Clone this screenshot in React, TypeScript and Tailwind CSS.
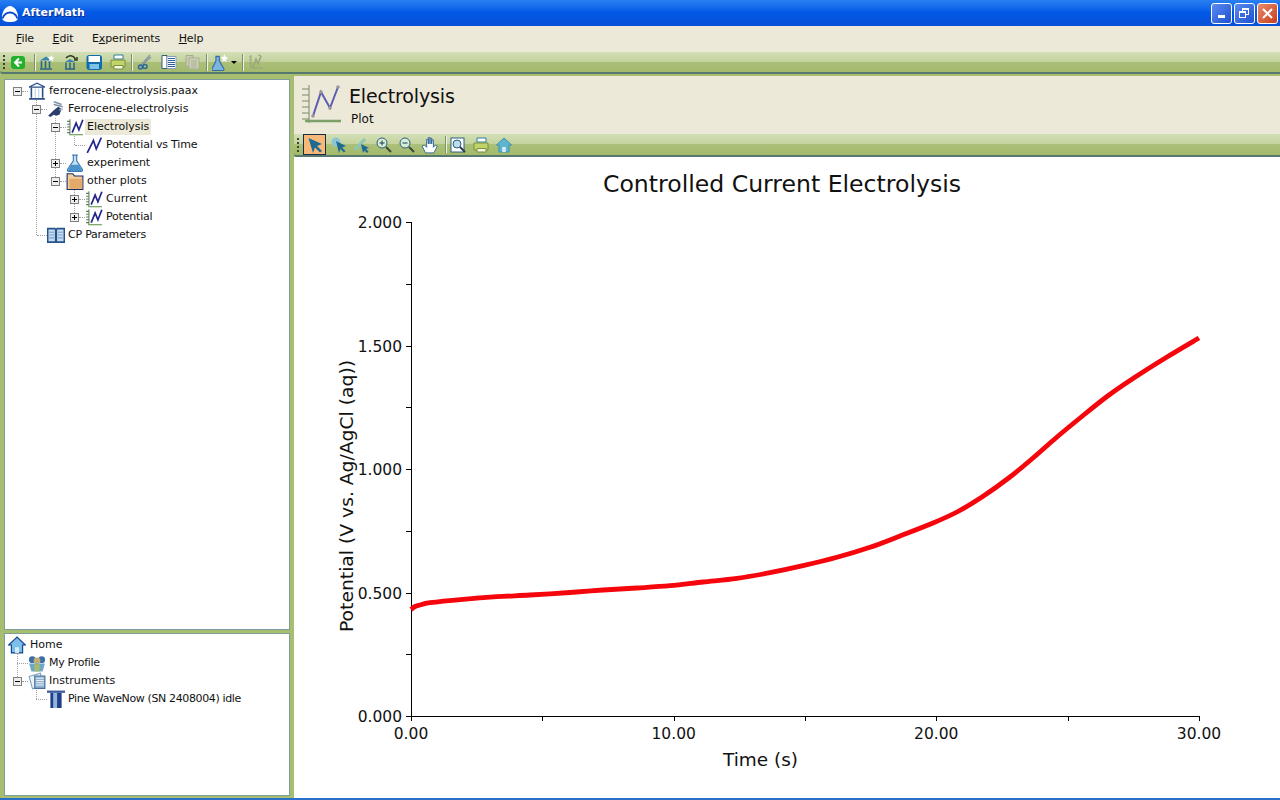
import type { JSX, ReactNode } from "react";

const FONT = "font-['DejaVu_Sans',sans-serif]";
const BIG = "w-[18px] h-[18px]";
const BAR = "flex items-center shrink-0 border-b-2 border-[#56786f] rounded-bl-[3px] bg-[linear-gradient(#d3dfb6,#c3d29d_50%,#abc078_50%,#a3ba6c)]";

function Icon({ children, size = "w-4 h-4" }: { children: ReactNode; size?: string }): JSX.Element {
  return (
    <svg viewBox="0 0 16 16" className={`${size} shrink-0`}>
      {children}
    </svg>
  );
}

function AppLogo(): JSX.Element {
  return (
    <svg viewBox="0 0 18 18" className="w-[18px] h-[18px] shrink-0">
      <path d="M1 12C1 6 5 1 9 1s8 5 8 11c0 4-3 5-8 5s-8-1-8-5Z" fill="#fff" />
      <path d="M1.500 13.500C3 9.500 6 7.500 9 7.500s6 2 7.500 6" fill="none" stroke="#0a46cc" strokeWidth="1.800" />
    </svg>
  );
}

function PlotIcon(): JSX.Element {
  return (
    <Icon size={BIG}>
      <path d="M3.500 1v14M1 3h2.500M1 5.500h2.500M1 8h2.500M1 10.500h2.500M1 13h2.500" stroke="#5a7a58" strokeWidth=".900" fill="none" />
      <path d="M3 14.800h12" stroke="#7fa86a" strokeWidth="1.200" />
      <path d="M5.500 13L9 4.500l2.500 6L15 1.500" stroke="#24268c" strokeWidth="1.500" fill="none" />
    </Icon>
  );
}

function LineIcon(): JSX.Element {
  return (
    <Icon size={BIG}>
      <path d="M2 15L7.500 4l2.500 7.500L14.500 1.500" stroke="#24268c" strokeWidth="1.500" fill="none" />
    </Icon>
  );
}

function ArchiveIcon(): JSX.Element {
  return (
    <Icon size={BIG}>
      <path d="M1 4.500L8 1l7 3.500z" fill="#fff" stroke="#2c4f86" />
      <path d="M3 5v9M13 5v9M1 15h14" stroke="#2c4f86" strokeWidth="1.400" fill="none" />
      <path d="M6.500 6v8M9.500 6v8" stroke="#bcd2e8" />
    </Icon>
  );
}

function ProjectIcon(): JSX.Element {
  return (
    <Icon size={BIG}>
      <path d="M1 14l5-5 4-3 3 2-2 5-3 1-2-1-3 2z" fill="#2c3f6b" />
      <path d="M6 1.500l7 2.500M6 4l8 2" stroke="#7f8fa6" strokeWidth="1.300" fill="none" />
      <path d="M11 9l3-1" stroke="#9fb3c8" strokeWidth="1.300" />
    </Icon>
  );
}

function FlaskIcon(): JSX.Element {
  return (
    <Icon size={BIG}>
      <path d="M5.500 1h5M6.500 1.500V6L1.500 13.500c-.600 1.200 0 2 1 2h11c1 0 1.600-.800 1-2L9.500 6V1.500" fill="#c4e0f2" stroke="#3a78b0" />
      <path d="M4.500 9.500h7l3 5.500H1.500z" fill="#4a92cc" />
    </Icon>
  );
}

function FolderIcon(): JSX.Element {
  return (
    <Icon size={BIG}>
      <path d="M1 1.500h5l1.500 2H15v12H1z" fill="#f3cf9a" stroke="#1f2f6b" />
      <path d="M3 6h11.500v9H3z" fill="#e2ab6c" />
    </Icon>
  );
}

function BookIcon(): JSX.Element {
  return (
    <Icon size={BIG}>
      <path d="M0 1.500h7.500l.500 1 .500-1H16V15H0z" fill="#27508c" />
      <path d="M1.300 3h5.700v10.500H1.300zM9 3h5.700v10.500H9z" fill="#c3dcef" />
      <path d="M2 5.500h4.300M2 8h4.300M2 10.500h4.300M9.700 5.500H14M9.700 8H14M9.700 10.500H14" stroke="#7da3c8" />
    </Icon>
  );
}

function HomeIcon({ toolbar = false }: { toolbar?: boolean }): JSX.Element {
  return (
    <Icon size={toolbar ? "w-4 h-4" : BIG}>
      <path d="M8 1L.500 8H3v7h10V8h2.500z" fill={toolbar ? "#5db5d0" : "#7cc0ea"} stroke={toolbar ? "#3f8fb0" : "#123f88"} strokeWidth="1" />
      <path d="M6.200 10h3.600v5H6.200z" fill="#d7ecf8" />
    </Icon>
  );
}

function ProfileIcon(): JSX.Element {
  return (
    <Icon size={BIG}>
      <circle cx="3.800" cy="5" r="3" fill="#3d6ea8" />
      <circle cx="12.200" cy="5" r="3" fill="#3d6ea8" />
      <circle cx="8" cy="6" r="3" fill="#c0b070" />
      <path d="M1 8.500h14l-2 7H3z" fill="#6ea7c9" />
      <path d="M5.500 9h5l-.500 6.500H6z" fill="#a8bd6a" />
    </Icon>
  );
}

function InstrumentsIcon(): JSX.Element {
  return (
    <Icon size={BIG}>
      <path d="M1 4l10-3 2 11-9 3z" fill="#edf4f8" stroke="#7fa3bf" />
      <path d="M6 3.500h9v11H6z" fill="#8fb5d0" stroke="#486f98" />
      <path d="M7 5.500h7M7 7.500h7M7 9.500h7M7 11.500h7" stroke="#e6f0f6" />
    </Icon>
  );
}

function PillarIcon(): JSX.Element {
  return (
    <Icon size={BIG}>
      <path d="M0 .500h16v2H0z" fill="#3c5a98" />
      <path d="M3 2.500h10V16H3z" fill="#1f3f86" />
      <path d="M5.500 2.500h3.500V16H5.500z" fill="#93b4e0" />
    </Icon>
  );
}

function Toggle({ open }: { open: boolean }): JSX.Element {
  return (
    <span className="w-[9px] h-[9px] border border-[#808080] bg-[#eeeeee] flex items-center justify-center shrink-0 relative z-10">
      <span className="w-[5px] h-px bg-black absolute" />
      {!open && <span className="w-px h-[5px] bg-black absolute" />}
    </span>
  );
}

type Row = {
  depth: number;
  label: string;
  icon: JSX.Element;
  toggle?: "open" | "closed";
  selected?: boolean;
  tight?: string;
};

// rows are 18px tall, every level moves 19px right like the Swing tree
function TreeRow({ depth, label, icon, toggle, selected, tight = "" }: Row): JSX.Element {
  const indent = ["pl-[8px]", "pl-[27px]", "pl-[46px]", "pl-[65px]"][depth];
  return (
    <div className={`h-[18px] flex items-center ${indent}`}>
      {toggle ? (
        <>
          <Toggle open={toggle === "open"} />
          <span className="w-[6px] border-t border-dotted border-[#a0a0a0]" />
        </>
      ) : (
        <span className="w-[10px] ml-[5px] border-t border-dotted border-[#a0a0a0]" />
      )}
      {icon}
      <span className={`ml-px text-[11px] leading-[16px] px-[2px] text-[#111] whitespace-nowrap ${tight} ${selected ? "bg-[#ece9d8]" : ""}`}>
        {label}
      </span>
    </div>
  );
}

const projectRows: Row[] = [
  { depth: 0, label: "ferrocene-electrolysis.paax", icon: <ArchiveIcon />, toggle: "open" },
  { depth: 1, label: "Ferrocene-electrolysis", icon: <ProjectIcon />, toggle: "open" },
  { depth: 2, label: "Electrolysis", icon: <PlotIcon />, toggle: "open", selected: true },
  { depth: 3, label: "Potential vs Time", icon: <LineIcon />, tight: "tracking-[-0.18px]" },
  { depth: 2, label: "experiment", icon: <FlaskIcon />, toggle: "closed" },
  { depth: 2, label: "other plots", icon: <FolderIcon />, toggle: "open" },
  { depth: 3, label: "Current", icon: <PlotIcon />, toggle: "closed" },
  { depth: 3, label: "Potential", icon: <PlotIcon />, toggle: "closed", tight: "tracking-[-0.2px]" },
  { depth: 1, label: "CP Parameters", icon: <BookIcon />, tight: "tracking-[-0.22px]" },
];

function Grip({ after }: { after: string }): JSX.Element {
  return (
    <span className={`flex flex-col gap-[2px] ml-[3px] shrink-0 ${after}`}>
      {[0, 1, 2, 3].map((i) => (
        <span key={i} className="w-[2px] h-[2px] bg-[#39452e]" />
      ))}
    </span>
  );
}

function Separator({ spacing }: { spacing: string }): JSX.Element {
  return <span className={`w-[2px] h-[17px] shrink-0 bg-[#eef3e0] border-l border-[#7d8f70] ${spacing}`} />;
}

function PrinterIcon(): JSX.Element {
  return (
    <Icon>
      <path d="M4 1h9v4H4z" fill="#fff" stroke="#2f7f9a" />
      <path d="M1 6h14v7H1z" fill="#c0d468" stroke="#7a8f40" />
      <path d="M4 11.500h9V15H4z" fill="#f6f8e4" stroke="#7a8f40" />
    </Icon>
  );
}

function MainToolbar(): JSX.Element {
  return (
    <div className={`h-[22px] ${BAR}`}>
      <Grip after="mr-[4px]" />
      <span className="w-[18px] flex justify-center">
        <Icon>
          <rect x="1" y="2" width="14" height="13" rx="3" fill="#22b02c" />
          <path d="M9 4.500L5 8.500l4 4M5.500 8.500H12" stroke="#fff" strokeWidth="2" fill="none" />
        </Icon>
      </span>
      <Separator spacing="ml-[7px] mr-[3px]" />
      <span className="flex items-center gap-[7.5px]">
        <Icon>
          <path d="M1 6.500l6-4 6 4z" fill="#3a86a8" />
          <path d="M2.500 7v7M6.500 7v7M10.500 7v7M1 15h12" stroke="#27668a" strokeWidth="1.600" fill="none" />
          <path d="M12 1l1 2 2.500.500-2 1.500.500 2.500-2-1.200-2 1.200.500-2.500-2-1.500 2.500-.500z" fill="#fff" />
        </Icon>
        <Icon>
          <path d="M2 8l5-3 5 3z" fill="#3a86a8" />
          <path d="M3 8.500v6M7 8.500v6M11 8.500v6M2 15h10" stroke="#27668a" strokeWidth="1.500" fill="none" />
          <path d="M3 4c3-3.500 7-3 9.500 1M14 3v3h-3" stroke="#2a3a20" strokeWidth="1.500" fill="none" />
        </Icon>
        <Icon>
          <rect x=".500" y="1" width="15.500" height="15" rx="3" fill="#0f6cae" />
          <rect x="2.500" y="2" width="11.500" height="6" fill="#fff" />
          <rect x="3.500" y="10" width="9.500" height="5" fill="#7fc0e6" />
        </Icon>
        <PrinterIcon />
      </span>
      <Separator spacing="ml-[5.500px] mr-[4px]" />
      <span className="flex items-center gap-[7.5px]">
        <Icon>
          <path d="M3 13L14 3M13 1L5 10" stroke="#8b9aa0" strokeWidth="1.500" fill="none" />
          <circle cx="3.500" cy="13" r="2" fill="none" stroke="#2c6a9a" strokeWidth="1.500" />
          <circle cx="8" cy="12.500" r="2" fill="none" stroke="#2c6a9a" strokeWidth="1.500" />
        </Icon>
        <Icon>
          <path d="M1 1.500h5v13H1z" fill="#fff" stroke="#3a5a80" />
          <path d="M6 2.500h9v12H6z" fill="#fff" stroke="#8aa0b8" />
          <path d="M7 4.500h7M7 6.500h7M7 8.500h7M7 10.500h7M7 12.500h7" stroke="#2c5f9a" />
        </Icon>
        <Icon>
          <path d="M2 1.500h7v11H2z" fill="#c7ccb2" stroke="#a8ad92" />
          <path d="M5 4h10v11H5z" fill="#ccd1b8" stroke="#a8ad92" />
          <path d="M7 7h6M7 9h6M7 11h6M7 13h6" stroke="#a8ad92" />
        </Icon>
      </span>
      <Separator spacing="ml-[6px] mr-[4px]" />
      <span className="flex items-center w-[24px]">
        <Icon size={BIG}>
          <path d="M3.500 3h3v4l4 7c.500 1 0 1.500-1 1.500H1c-1 0-1.500-.500-1-1.500l3.500-7z" fill="#7fb5dc" stroke="#2f6ca8" />
          <path d="M11 1l1 2.500 2.500.500-2 1.500.500 2.500-2-1.200-2 1.200.500-2.500-2-1.500 2.500-.500z" fill="#fff" />
        </Icon>
        <span className="w-0 h-0 ml-px border-l-[3px] border-r-[3px] border-t-[3px] border-l-transparent border-r-transparent border-t-black" />
      </span>
      <Separator spacing="ml-[6px] mr-[4px]" />
      <Icon>
        <path d="M3 1v13h12" stroke="#9aa57c" fill="none" />
        <path d="M5 13l3-8 2 5 3-8" stroke="#9aa57c" strokeWidth="1.500" fill="none" />
        <path d="M10 1l3 .500M1 3h2M1 6h2M1 9h2" stroke="#9aa57c" />
      </Icon>
    </div>
  );
}

function PlotToolbar(): JSX.Element {
  return (
    <div className={`h-[23px] ${BAR}`}>
      <Grip after="mr-[4px]" />
      <span className="w-[23px] h-[21px] flex items-center justify-center bg-[#f7b878] border border-[#1a2a4a] shrink-0">
        <Icon>
          <path d="M1.500 1l13.500 6-5 2 5 5-2 1.500-5-5-2 5.500z" fill="#1f6a92" />
        </Icon>
      </span>
      <span className="flex items-center gap-[6.5px] ml-[5px]">
        <Icon>
          <circle cx="5" cy="5" r="4.500" fill="#8cc6d6" />
          <path d="M5 4l10 5-4 1.500 3.500 3.500-1.500 1.500-3.500-3.500-1.500 4z" fill="#1f6a92" />
        </Icon>
        <Icon>
          <path d="M1 13L11 2" stroke="#8cc6b6" strokeWidth="3" />
          <path d="M7 7l8 4-3 1 2.500 2.500-1.500 1.500-2.500-2.500-1.500 2.500z" fill="#1f6a92" />
        </Icon>
        <Icon>
          <circle cx="6" cy="6" r="5" fill="#d9ecd8" stroke="#2a5f80" />
          <path d="M3.500 6h5M6 3.500v5" stroke="#1a3a50" />
          <path d="M10 10l5 5" stroke="#3a4a3a" strokeWidth="2" />
        </Icon>
        <Icon>
          <circle cx="6" cy="6" r="5" fill="#d9ecd8" stroke="#2a5f80" />
          <path d="M3.500 6h5" stroke="#1a3a50" />
          <path d="M10 10l5 5" stroke="#3a4a3a" strokeWidth="2" />
        </Icon>
        <Icon size={BIG}>
          <path d="M4 15L1 9l2-1 2 2V3h1.500v4V1.500H8V7V2h1.500v5V3.500H11V10l2-2 1.500 1-3 6z" fill="#fff" stroke="#2a5f90" strokeWidth=".800" />
        </Icon>
      </span>
      <Separator spacing="ml-[6px] mr-[3px]" />
      <span className="flex items-center gap-[7px]">
        <Icon>
          <rect x="1" y="1" width="13" height="14" fill="#fff" stroke="#2a5f80" />
          <circle cx="7" cy="7" r="4" fill="#bcdcee" stroke="#2a5f80" />
          <path d="M10 10l5 5" stroke="#2a3a50" strokeWidth="2" />
        </Icon>
        <PrinterIcon />
        <HomeIcon toolbar />
      </span>
    </div>
  );
}

const yTicks = [
  { y: 222, label: "2.000" },
  { y: 283.8 },
  { y: 345.5, label: "1.500" },
  { y: 407.3 },
  { y: 469, label: "1.000" },
  { y: 530.8 },
  { y: 592.5, label: "0.500" },
  { y: 654.3 },
  { y: 716, label: "0.000" },
];

const xTicks = [
  { x: 411, label: "0.00" },
  { x: 542.3 },
  { x: 673.7, label: "10.00" },
  { x: 805 },
  { x: 936.3, label: "20.00" },
  { x: 1067.7 },
  { x: 1199, label: "30.00" },
];

const samples: [number, number][] = [
  [411, 609.5], [415, 606.5], [420, 605], [430, 602.7], [463, 599.3], [497, 596.7], [530, 595], [570, 592.5],
  [603, 590], [637, 588], [670, 585.7], [703, 582], [737, 578.3], [770, 572.7], [803, 565.7], [837, 557.3],
  [870, 547.3], [900, 536], [933, 523], [957, 512], [982, 497], [1010, 477], [1033, 458], [1057, 437],
  [1080, 418], [1107, 396.5], [1133, 378.5], [1167, 357], [1199, 338],
];

// catmull-rom through the samples, so the line has no corners
function smoothPath(pts: [number, number][]): string {
  let d = `M${pts[0][0]} ${pts[0][1]}`;
  for (let i = 0; i < pts.length - 1; i++) {
    const p0 = pts[Math.max(i - 1, 0)];
    const p1 = pts[i];
    const p2 = pts[i + 1];
    const p3 = pts[Math.min(i + 2, pts.length - 1)];
    const c1x = p1[0] + (p2[0] - p0[0]) / 6;
    const c1y = p1[1] + (p2[1] - p0[1]) / 6;
    const c2x = p2[0] - (p3[0] - p1[0]) / 6;
    const c2y = p2[1] - (p3[1] - p1[1]) / 6;
    d += `C${c1x} ${c1y} ${c2x} ${c2y} ${p2[0]} ${p2[1]}`;
  }
  return d;
}

function Chart(): JSX.Element {
  return (
    <svg viewBox="294 157 986 641" className="w-full h-full block" fontFamily="'DejaVu Sans', sans-serif" fill="#111">
      <text x="782" y="192" textAnchor="middle" fontSize="23" textLength="358" lengthAdjust="spacingAndGlyphs">
        Controlled Current Electrolysis
      </text>
      <path d="M411.500 222V716.500H1199" stroke="#000" fill="none" />
      {yTicks.map((t) => (
        <g key={t.y}>
          <path d={`M406 ${Math.round(t.y) + 0.5}H411`} stroke="#000" />
          {t.label && (
            <text x="402" y={t.y + 6} textAnchor="end" fontSize="15.500">
              {t.label}
            </text>
          )}
        </g>
      ))}
      {xTicks.map((t) => (
        <g key={t.x}>
          <path d={`M${Math.round(t.x) + 0.5} 716V721`} stroke="#000" />
          {t.label && (
            <text x={t.x} y="739" textAnchor="middle" fontSize="15.500">
              {t.label}
            </text>
          )}
        </g>
      ))}
      <text x="760.500" y="766" textAnchor="middle" fontSize="17" textLength="75" lengthAdjust="spacingAndGlyphs">
        Time (s)
      </text>
      <text transform="translate(353 496) rotate(-90)" textAnchor="middle" fontSize="17" textLength="272" lengthAdjust="spacingAndGlyphs">
        Potential (V vs. Ag/AgCl (aq))
      </text>
      <path d={smoothPath(samples)} stroke="#f4060c" strokeWidth="4.800" fill="none" strokeLinejoin="round" />
    </svg>
  );
}

export default function App(): JSX.Element {
  return (
    <div className={`w-[1280px] h-[800px] overflow-hidden flex flex-col bg-[#a7bd6f] ${FONT}`}>
      {/* Title bar */}
      <div className="h-[26px] flex items-center bg-gradient-to-b from-[#2a7ff0] via-[#0058e6] to-[#0a50d8] shrink-0">
        <span className="ml-[1px] mt-[2px]">
          <AppLogo />
        </span>
        <span className="ml-[3px] pt-px flex-1 text-white font-bold text-[11px] [text-shadow:1px_1px_#0a2a90]">AfterMath</span>
        <div className="flex items-center gap-[2px] mr-[2px]">
          <span className="w-[21px] h-[21px] rounded-[3px] border border-white bg-gradient-to-br from-[#5a8cf0] to-[#1f4fd0] flex items-end pl-[6px] pb-[5px]">
            <span className="w-[7px] h-[3px] bg-white" />
          </span>
          <span className="w-[21px] h-[21px] rounded-[3px] border border-white bg-gradient-to-br from-[#5a8cf0] to-[#1f4fd0] relative">
            <span className="absolute left-[7px] top-[4px] w-[7px] h-[7px] border border-white border-t-2" />
            <span className="absolute left-[4px] top-[7px] w-[7px] h-[7px] border border-white border-t-2 bg-[#3a6ce0]" />
          </span>
          <span className="w-[21px] h-[21px] rounded-[3px] border border-white bg-gradient-to-br from-[#e88a6a] to-[#c83a18] flex items-center justify-center">
            <svg viewBox="0 0 11 11" className="w-[11px] h-[11px]">
              <path d="M1 1l9 9M10 1l-9 9" stroke="#fff" strokeWidth="2" />
            </svg>
          </span>
        </div>
      </div>

      {/* Menu */}
      <div className="h-[26px] flex items-center pl-[16px] gap-[18.500px] tracking-[-0.1px] bg-[#ece9d8] text-[11px] text-[#111] shrink-0">
        <span><span className="underline">F</span>ile</span>
        <span><span className="underline">E</span>dit</span>
        <span>E<span className="underline">x</span>periments</span>
        <span><span className="underline">H</span>elp</span>
      </div>

      <MainToolbar />

      <div className="flex-1 flex min-h-0">
        {/* Left side */}
        <div className="w-[294px] shrink-0 pl-[4px] pr-[4px] pt-[5px] pb-[2px] flex flex-col gap-[3px]">
          <div className="h-[551px] bg-white border border-[#7f9d9a] pt-[2px] relative">
            {/* dotted tree guides */}
            <span className="absolute left-[31px] top-[20px] h-[135px] border-l border-dotted border-[#a0a0a0]" />
            <span className="absolute left-[50px] top-[38px] h-[63px] border-l border-dotted border-[#a0a0a0]" />
            <span className="absolute left-[69px] top-[56px] h-[9px] border-l border-dotted border-[#a0a0a0]" />
            <span className="absolute left-[69px] top-[110px] h-[27px] border-l border-dotted border-[#a0a0a0]" />
            {projectRows.map((r) => (
              <TreeRow key={r.label} {...r} />
            ))}
          </div>
          <div className="flex-1 bg-white border border-[#7f9d9a] pt-[2px] relative text-[11px] text-[#111]">
            <span className="absolute left-[12px] top-[19px] h-[28px] border-l border-dotted border-[#a0a0a0]" />
            <span className="absolute left-[31px] top-[56px] h-[9px] border-l border-dotted border-[#a0a0a0]" />
            <div className="h-[18px] flex items-center pl-[3px]">
              <HomeIcon />
              <span className="ml-[4px]">Home</span>
            </div>
            <div className="h-[18px] flex items-center pl-[12px]">
              <span className="w-[11px] border-t border-dotted border-[#a0a0a0]" />
              <ProfileIcon />
              <span className="ml-[3px] tracking-[-0.3px]">My Profile</span>
            </div>
            <div className="h-[18px] flex items-center pl-[8px]">
              <Toggle open />
              <span className="w-[6px] border-t border-dotted border-[#a0a0a0]" />
              <InstrumentsIcon />
              <span className="ml-[3px]">Instruments</span>
            </div>
            <div className="h-[18px] flex items-center pl-[31px]">
              <span className="w-[11px] border-t border-dotted border-[#a0a0a0]" />
              <PillarIcon />
              <span className="ml-[3px] whitespace-nowrap tracking-[-0.37px]">Pine WaveNow (SN 2408004) idle</span>
            </div>
          </div>
        </div>

        {/* Right side */}
        <div className="flex-1 flex flex-col min-w-0">
          <div className="h-[58px] mt-[2px] bg-[#ece9d8] flex items-center shrink-0">
            <svg viewBox="0 0 40 40" className="w-[40px] h-[40px] ml-[7px] shrink-0">
              <path d="M8 0v38M1 4h7M1 10h7M1 16h7M1 22h7M1 28h7M1 34h7" stroke="#7a8a6a" fill="none" />
              <path d="M4 36h36" stroke="#7ca06a" strokeWidth="2.500" />
              <path d="M12 31l8-24 9 16 8-21" stroke="#5c5cb0" strokeWidth="2" fill="none" />
              <circle cx="12" cy="31" r="1.800" fill="#9a9a9a" />
              <circle cx="20" cy="7" r="1.800" fill="#9a9a9a" />
              <circle cx="29" cy="23" r="1.800" fill="#9a9a9a" />
              <circle cx="37" cy="2" r="1.800" fill="#9a9a9a" />
            </svg>
            <div className="ml-[8px] text-[#111]">
              <div className="text-[19px] leading-[24px] tracking-[-0.15px]">Electrolysis</div>
              <div className="text-[12px] leading-[16px] mt-[3px] ml-[2px]">Plot</div>
            </div>
          </div>
          <PlotToolbar />
          <div className="flex-1 min-h-0 bg-white">
            <Chart />
          </div>
        </div>
      </div>
      <div className="h-[2px] bg-[#2a6fc8] shrink-0" />
    </div>
  );
}
